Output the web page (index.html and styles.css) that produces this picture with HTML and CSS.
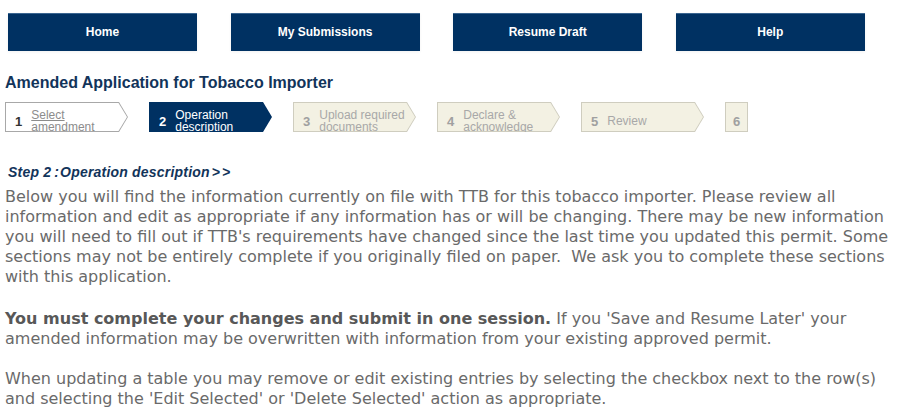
FILE: index.html
```html
<!DOCTYPE html>
<html lang="en">
<head>
<meta charset="utf-8">
<title>Amended Application for Tobacco Importer</title>
<link rel="stylesheet" href="styles.css">
</head>
<body>
<nav class="topnav">
  <a class="nav-btn" href="#">Home</a>
  <a class="nav-btn" href="#">My Submissions</a>
  <a class="nav-btn" href="#">Resume Draft</a>
  <a class="nav-btn" href="#">Help</a>
</nav>

<h1 class="page-title">Amended Application for Tobacco Importer</h1>

<ol class="steps">
  <li class="step step-done"><span class="step-num">1</span><a class="step-label" href="#">Select amendment</a></li>
  <li class="step step-current"><span class="step-num">2</span><span class="step-label">Operation description</span></li>
  <li class="step step-todo"><span class="step-num">3</span><span class="step-label">Upload required documents</span></li>
  <li class="step step-todo"><span class="step-num">4</span><span class="step-label">Declare &amp; acknowledge</span></li>
  <li class="step step-todo"><span class="step-num">5</span><span class="step-label">Review</span></li>
  <li class="step step-todo step-last"><span class="step-num">6</span></li>
</ol>

<main class="content">
  <h2 class="step-heading">Step 2<span class="colon">:</span>Operation description<span class="arrows">&gt;&gt;</span></h2>
  <p class="intro">Below you will find the information currently on file with TTB for this tobacco importer. Please review all information and edit as appropriate if any information has or will be changing. There may be new information you will need to fill out if TTB's requirements have changed since the last time you updated this permit. Some sections may not be entirely complete if you originally filed on paper.&nbsp; We ask you to complete these sections with this application.</p>
  <p class="intro intro-session"><strong>You must complete your changes and submit in one session.</strong> If you 'Save and Resume Later' your amended information may be overwritten with information from your existing approved permit.</p>
  <p class="intro">When updating a table you may remove or edit existing entries by selecting the checkbox next to the row(s) and selecting the 'Edit Selected' or 'Delete Selected' action as appropriate.</p>
</main>
</body>
</html>
```

FILE: styles.css
```css
html, body {
  margin: 0;
  padding: 0;
  background: #ffffff;
  overflow-x: hidden;
}

body {
  font-family: "Liberation Sans", Arial, sans-serif;
}

/* Top navigation */
.topnav {
  display: flex;
  gap: 33.6px;
  padding: 13px 0 0 8px;
}

.nav-btn {
  display: flex;
  align-items: center;
  justify-content: center;
  width: 189px;
  height: 38px;
  box-sizing: border-box;
  padding-bottom: 1px;
  background: #003162;
  border-top: 1px solid #3a6590;
  color: #ffffff;
  font-size: 12px;
  font-weight: bold;
  text-decoration: none;
  box-shadow: 0 1px 3px rgba(0, 0, 0, 0.06);
}

/* Title */
.page-title {
  margin: 23px 0 0 5px;
  font-size: 16px;
  line-height: 18px;
  font-weight: bold;
  color: #12345a;
}

/* Step bar */
.steps {
  list-style: none;
  display: flex;
  gap: 21px;
  margin: 10px 0 0 5px;
  padding: 0;
}

.step {
  --bd: #cfcdbf;
  --bg: #f3f1e3;
  position: relative;
  display: flex;
  align-items: center;
  width: 123px;
  height: 30px;
  box-sizing: border-box;
  padding: 7px 0 0 10px;
  background: var(--bd);
  clip-path: polygon(0 0, calc(100% - 9px) 0, 100% 50%, calc(100% - 9px) 100%, 0 100%);
  overflow: hidden;
  font-size: 12px;
  line-height: 12px;
  color: #a8a8a8;
}

.step::before {
  content: "";
  position: absolute;
  inset: 1px;
  background: var(--bg);
  clip-path: polygon(0 0, calc(100% - 8.5px) 0, 100% 50%, calc(100% - 8.5px) 100%, 0 100%);
}

.step-num,
.step-label {
  position: relative;
}

.step-num {
  flex: none;
  margin-right: 9px;
  margin-top: 2px;
  font-size: 13px;
  font-weight: bold;
  color: #a0a0a0;
}

.step-label {
  color: #a8a8a8;
  text-decoration: none;
}

.step-done {
  --bd: #a8a8a8;
  --bg: #ffffff;
}

.step-done .step-num {
  color: #333333;
}

.step-done .step-label {
  color: #8c8c8c;
  text-decoration: underline;
}

.step-current {
  --bd: #003162;
  --bg: #003162;
}

.step-current .step-num,
.step-current .step-label {
  color: #ffffff;
}

.step-last {
  width: 23px;
  padding: 7px 0 0 0;
  justify-content: center;
  clip-path: none;
}

.step-last::before {
  clip-path: none;
}

.step-last .step-num {
  margin-right: 0;
}

/* Content */
.content {
  padding: 0 0 0 5px;
}

.step-heading {
  margin: 32px 0 0 3px;
  font-size: 14px;
  line-height: 16px;
  font-weight: bold;
  font-style: italic;
  color: #12345a;
  letter-spacing: 0.2px;
}

.step-heading .colon {
  margin: 0 1px 0 3px;
}

.step-heading .arrows {
  margin-left: 2px;
  letter-spacing: 2px;
}

.intro {
  margin: 7px 0 0 0;
  font-family: "DejaVu Sans", Verdana, sans-serif;
  font-size: 16px;
  line-height: 20px;
  color: #6a6a6a;
}

.intro + .intro {
  margin-top: 20px;
}

.intro-session {
  margin-top: 22px !important;
}

.intro strong {
  color: #585858;
}
```
